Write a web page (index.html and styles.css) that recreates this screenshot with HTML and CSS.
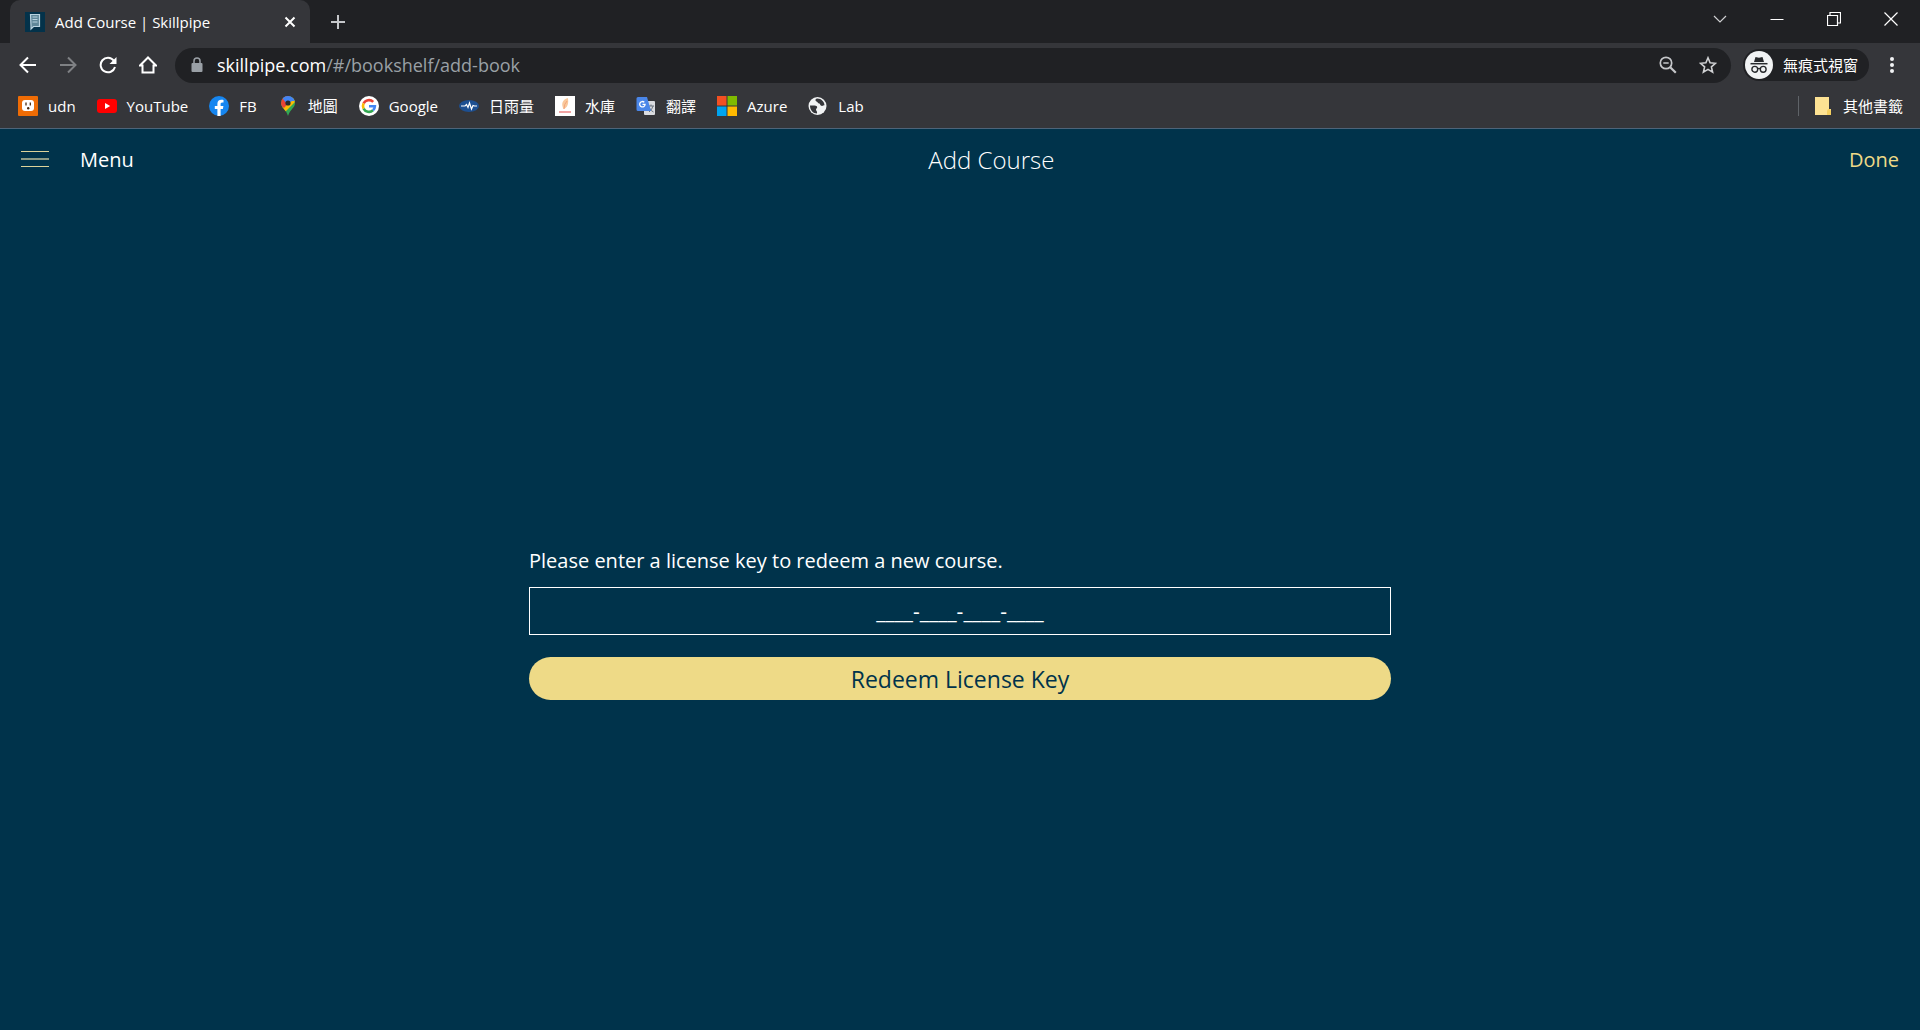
FILE: index.html
```html
<!DOCTYPE html>
<html lang="zh-Hant">
<head>
<meta charset="utf-8">
<meta name="viewport" content="width=device-width, initial-scale=1">
<title>Add Course | Skillpipe</title>
<link rel="stylesheet" href="styles.css">
</head>
<body>
<div class="browser">
  <div class="tabstrip">
    <div class="tab">
      <svg class="tab-icon" viewBox="0 0 20 20" width="20" height="20" aria-hidden="true"><rect width="20" height="20" fill="#03324a"/><path d="M5.500 2.500h9v12h-6l-2.500 2.500v-3z" fill="#5f8798" stroke="#b9d3df" stroke-width="1.200"/><path d="M7.500 5h5M7.500 7.500h5M7.500 10h5" stroke="#b9d3df"/></svg>
      <span class="tab-title">Add Course | Skillpipe</span>
      <button class="icon-button" aria-label="Close tab"><svg viewBox="0 0 12 12" width="12" height="12"><path d="M1.500 1.500l9 9M10.500 1.500l-9 9" stroke="#fff" stroke-width="2"/></svg></button>
    </div>
    <button class="icon-button new-tab" aria-label="New tab"><svg viewBox="0 0 16 16" width="16" height="16"><path d="M8 1v14M1 8h14" stroke="#c5c7ca" stroke-width="2"/></svg></button>
    <div class="window-controls">
      <button class="window-button" aria-label="Search tabs"><svg viewBox="0 0 14 14" width="14" height="14"><path d="M1 4l6 6 6-6" fill="none" stroke="#cfd0d2" stroke-width="1.200"/></svg></button>
      <button class="window-button" aria-label="Minimize"><svg viewBox="0 0 14 14" width="14" height="14"><path d="M.5 7.500h13" stroke="#fff"/></svg></button>
      <button class="window-button" aria-label="Restore"><svg viewBox="0 0 14 14" width="14" height="14"><path d="M.5 3.500h10v10h-10zM3 3.500v-3h10.500V11h-3" fill="none" stroke="#fff" stroke-width="1.200"/></svg></button>
      <button class="window-button" aria-label="Close"><svg viewBox="0 0 14 14" width="14" height="14"><path d="M.5.5l13 13M13.500.5l-13 13" stroke="#fff" stroke-width="1.200"/></svg></button>
    </div>
  </div>
  <div class="toolbar">
    <div class="nav">
      <button class="icon-button" aria-label="Back"><svg viewBox="0 0 18 18" width="18" height="18"><path d="M17 9H2M9 1.500L1.500 9 9 16.500" fill="none" stroke="#fff" stroke-width="2"/></svg></button>
      <button class="icon-button" aria-label="Forward"><svg viewBox="0 0 18 18" width="18" height="18"><path d="M1 9h15M9 1.500L16.500 9 9 16.500" fill="none" stroke="#7f8184" stroke-width="2"/></svg></button>
      <button class="icon-button" aria-label="Reload"><svg viewBox="0 0 18 18" width="18" height="18"><path d="M14.800 4.600A7.300 7.300 0 1 0 16 11" fill="none" stroke="#fff" stroke-width="2"/><path d="M17.500 1v7h-7z" fill="#fff"/></svg></button>
      <button class="icon-button" aria-label="Home"><svg viewBox="0 0 18 18" width="18" height="18"><path d="M1 9.500l8-8 8 8h-2.500v7h-11v-7z" fill="none" stroke="#fff" stroke-width="2"/></svg></button>
    </div>
    <div class="omnibox">
      <svg viewBox="0 0 12 16" width="12" height="16" aria-hidden="true"><rect x=".5" y="6" width="11" height="9" rx="1" fill="#9aa0a6"/><path d="M3 7V4a3 3 0 0 1 6 0v3" fill="none" stroke="#9aa0a6" stroke-width="1.500"/></svg>
      <span class="url">skillpipe.com<span class="url-path">/#/bookshelf/add-book</span></span>
      <button class="icon-button" aria-label="Zoom"><svg viewBox="0 0 18 18" width="18" height="18"><circle cx="7" cy="7" r="5.700" fill="none" stroke="#c5c7ca" stroke-width="1.700"/><path d="M11.200 11.200l5.600 5.600" stroke="#c5c7ca" stroke-width="2.200"/><path d="M4.300 7h5.400" stroke="#c5c7ca" stroke-width="1.500"/></svg></button>
      <button class="icon-button" aria-label="Bookmark this page"><svg viewBox="0 0 18 18" width="18" height="18"><path d="M9 1.800l2.100 5 5.400.5-4.100 3.600 1.200 5.300L9 13.400l-4.600 2.800 1.200-5.300-4.100-3.600 5.400-.5z" fill="none" stroke="#d0d1d3" stroke-width="1.600"/></svg></button>
    </div>
    <button class="profile">
      <svg viewBox="0 0 28 28" width="28" height="28" aria-hidden="true"><circle cx="14" cy="14" r="14" fill="#f1f3f4"/><path d="M9 11l1.500-5 3.500.8 3.500-.8L19 11z" fill="#27292c"/><path d="M5.500 12.700h17" stroke="#27292c" stroke-width="1.500"/><circle cx="9.800" cy="18.300" r="2.900" fill="none" stroke="#27292c" stroke-width="1.400"/><circle cx="18.200" cy="18.300" r="2.900" fill="none" stroke="#27292c" stroke-width="1.400"/><path d="M12.600 17.800q1.400-.8 2.800 0" fill="none" stroke="#27292c" stroke-width="1.400"/></svg>
      <span>無痕式視窗</span>
    </button>
    <button class="icon-button more" aria-label="More"><svg viewBox="0 0 4 18" width="4" height="18"><circle cx="2" cy="3" r="2" fill="#f1f3f4"/><circle cx="2" cy="9" r="2" fill="#f1f3f4"/><circle cx="2" cy="15" r="2" fill="#f1f3f4"/></svg></button>
  </div>
  <nav class="bookmarks" aria-label="Bookmarks">
    <a class="bookmark" href="#"><svg viewBox="0 0 20 20" width="20" height="20"><rect width="20" height="20" rx="1" fill="#ef6c05"/><rect x="4" y="4" width="12" height="11" rx="3" fill="#fff"/><path d="M8 6.500v3M12.300 6.500v3" stroke="#4a2a10" stroke-width="1.300"/><circle cx="10.200" cy="12.300" r="1.200" fill="#4a2a10"/></svg><span>udn</span></a>
    <a class="bookmark" href="#"><svg viewBox="0 0 20 20" width="20" height="20"><rect y="3" width="20" height="14" rx="3" fill="#f00"/><path d="M8 7l5.200 3L8 13z" fill="#fff"/></svg><span>YouTube</span></a>
    <a class="bookmark" href="#"><svg viewBox="0 0 20 20" width="20" height="20"><circle cx="10" cy="10" r="10" fill="#1686f0"/><path d="M8.400 20v-7H5.800v-3h2.600V7.800c0-2.600 1.500-4 3.900-4 1.100 0 2.200.2 2.200.2v2.500h-1.300c-1.200 0-1.600.8-1.600 1.600V10h2.800l-.5 3h-2.300v7z" fill="#fff"/></svg><span>FB</span></a>
    <a class="bookmark" href="#"><svg viewBox="0 0 20 20" width="20" height="20"><defs><clipPath id="pin"><path d="M10 0a7 7 0 0 0-7 7c0 5 5 6 7 13 2-7 7-8 7-13a7 7 0 0 0-7-7z"/></clipPath></defs><g clip-path="url(#pin)"><path d="M0 0h20v20H0z" fill="#34a853"/><path d="M3 20V12L15 1l3 0v4z" fill="#fbbc04"/><path d="M2 0h9l4 2-9 10-4-3z" fill="#ea4335"/><path d="M5 0h12v5h-3L9 8 4.600 2.500z" fill="#4285f4"/></g><circle cx="10" cy="7" r="2.600" fill="#292a2d"/></svg><span>地圖</span></a>
    <a class="bookmark" href="#"><svg viewBox="0 0 20 20" width="20" height="20"><circle cx="10" cy="10" r="10" fill="#fff"/><g fill="none" stroke-width="2.600"><path d="M14.200 5.900A6 6 0 0 0 4.600 7.400" stroke="#ea4335"/><path d="M4.600 7.400a6 6 0 0 0 0 5.200" stroke="#fbbc05"/><path d="M4.600 12.600a6 6 0 0 0 9.400 1.700" stroke="#34a853"/><path d="M14 14.300a6 6 0 0 0 1.900-4.100H10" stroke="#4285f4"/></g></svg><span>Google</span></a>
    <a class="bookmark" href="#"><svg viewBox="0 0 20 20" width="20" height="20"><ellipse cx="10" cy="10" rx="10" ry="6" fill="#1d4f91"/><path d="M2 10h4l1.500-1.500L9 11.500 10.500 7l2 6 1.500-3.500 1.500.5H18" fill="none" stroke="#fff" stroke-width="1.200"/></svg><span>日雨量</span></a>
    <a class="bookmark" href="#"><svg viewBox="0 0 20 20" width="20" height="20"><rect width="20" height="20" fill="#fff"/><path d="M12.800 2C7 4 6 8 8.500 13c4-1 5.500-6 4.300-11z" fill="#f9c99c"/><path d="M9 13q0-5 3-8" fill="none" stroke="#f3a57c"/><path d="M4 16h12" stroke="#ec8585" stroke-width="1.500"/></svg><span>水庫</span></a>
    <a class="bookmark" href="#"><svg viewBox="0 0 20 20" width="20" height="20"><rect x="8" y="5" width="11" height="14" rx="1" fill="#dadce0"/><path d="M12 10h6M15 8.500V10M17 10q-1 4-4 6M13.500 12q1.500 3 4 4" fill="none" stroke="#6b7580"/><path d="M2 1h9l4 14H2a1.500 1.500 0 0 1-1.500-1.500v-11A1.500 1.500 0 0 1 2 1z" fill="#4a86e8"/><path d="M8.300 6.300a2.700 2.700 0 1 0 .8 2H6.500" fill="none" stroke="#fff" stroke-width="1.300"/></svg><span>翻譯</span></a>
    <a class="bookmark" href="#"><svg viewBox="0 0 20 20" width="20" height="20"><path d="M0 0h9.500v9.500H0z" fill="#f25022"/><path d="M10.500 0H20v9.500h-9.500z" fill="#7fba00"/><path d="M0 10.500h9.500V20H0z" fill="#00a4ef"/><path d="M10.500 10.500H20V20h-9.500z" fill="#ffb900"/></svg><span>Azure</span></a>
    <a class="bookmark" href="#"><svg viewBox="0 0 20 20" width="20" height="20"><circle cx="9.500" cy="10" r="9" fill="#f1f3f4"/><path d="M2 9.500c3 0 6-.5 7 1 .8 1.500-1 2-1 3 0 1.500 1.500 1.500 1 4C5 17.500 2 14 2 9.500zM9 2.600c-2 .4-2 2.400-.5 2.900 1.500.4 1.300 2 2.700 2 1 0 .8 1.800 2 2.300 1.600.6 3.200-1 3.300-.3 0-3.500-3-7-7.500-6.900z" fill="#35363a"/></svg><span>Lab</span></a>
    <a class="bookmark other" href="#"><svg viewBox="0 0 20 20" width="20" height="20"><path d="M2 1h14v12h2v6H2z" fill="#fde293"/><path d="M14 19v-3q0-3 2-3t2 3v3z" fill="#f5cf5e"/></svg><span>其他書籤</span></a>
  </nav>
</div>
<header class="app-header">
  <button class="menu">
    <svg viewBox="0 0 30 18" width="30" height="18" aria-hidden="true"><path d="M1 1.500h28M1 16.500h28" stroke="#ddd39a"/><path d="M1 9h28" stroke="#b9bd98" stroke-width="1.500"/></svg>
    <span>Menu</span>
  </button>
  <h1 class="title">Add Course</h1>
  <a class="done" href="#">Done</a>
</header>
<main class="content">
  <form class="redeem">
    <label class="prompt" for="license-key">Please enter a license key to redeem a new course.</label>
    <input class="key" id="license-key" type="text" value="____-____-____-____">
    <button class="submit" type="submit">Redeem License Key</button>
  </form>
</main>
</body>
</html>
```
FILE: styles.css
```css
* {
  box-sizing: border-box;
}

body {
  margin: 0;
  min-height: 100vh;
  background: #00334b;
  color: #fff;
  font-family: "Open Sans", "Noto Sans CJK TC", sans-serif;
  font-size: 15px;
}

button {
  padding: 0;
  border: 0;
  background: none;
  color: inherit;
  font: inherit;
}

a {
  color: inherit;
  text-decoration: none;
}

svg {
  display: block;
  flex: none;
}

.browser {
  background: #35363a;
  border-bottom: 1px solid #4d6479;
  line-height: 20px;
}

.tabstrip {
  display: flex;
  align-items: stretch;
  height: 43px;
  padding: 0 1px 0 10px;
  background: #202124;
}

.tab {
  display: flex;
  align-items: center;
  gap: 10px;
  width: 300px;
  padding: 0 14px 0 15px;
  border-radius: 10px 10px 0 0;
  background: #35363a;
}

.tab-title {
  flex: 1;
}

.icon-button {
  display: flex;
  align-items: center;
  justify-content: center;
}

.new-tab {
  padding: 0 20px;
}

.window-controls {
  display: flex;
  margin-left: auto;
}

.window-button {
  display: flex;
  justify-content: center;
  align-items: center;
  width: 57px;
  height: 38px;
}

.toolbar {
  display: flex;
  align-items: center;
  height: 44px;
  padding: 0 26px 0 19px;
}

.nav {
  display: flex;
  gap: 22px;
  margin-right: 18px;
}

.omnibox {
  display: flex;
  flex: 1;
  align-items: center;
  gap: 22px;
  height: 35px;
  padding: 0 14px 0 16px;
  border-radius: 18px;
  background: #202124;
}

.url {
  flex: 1;
  margin-left: -8px;
  font-size: 18px;
}

.url-path {
  color: #9aa0a6;
}

.profile {
  display: flex;
  align-items: center;
  gap: 10px;
  height: 32px;
  margin-left: 12px;
  padding: 0 11px 0 2px;
  border-radius: 16px;
  background: #202124;
}

.more {
  margin-left: 21px;
}

.bookmarks {
  display: flex;
  align-items: center;
  gap: 21px;
  height: 41px;
  padding: 0 17px 3px 18px;
}

.bookmark {
  display: flex;
  align-items: center;
  gap: 10px;
}

.other {
  margin-left: auto;
  padding-left: 14px;
  border-left: 1px solid #5f6368;
}

.app-header {
  display: flex;
  align-items: center;
  justify-content: space-between;
  height: 60px;
  padding: 0 21px 0 20px;
  font-size: 20px;
}

.menu {
  display: flex;
  align-items: center;
  gap: 30px;
}

.title {
  margin: 0;
  font-size: 24px;
  font-weight: 300;
}

.done {
  color: #eeda87;
}

.content {
  padding: 354px 20px 20px;
}

.redeem {
  display: flex;
  flex-direction: column;
  max-width: 862px;
  margin: 0 auto;
}

.prompt {
  margin-bottom: 8px;
  font-size: 20px;
  line-height: 36px;
}

.key {
  height: 48px;
  margin-bottom: 22px;
  padding: 0 12px;
  border: 1px solid #fff;
  border-radius: 0;
  background: transparent;
  color: #fff;
  font: inherit;
  font-size: 21px;
  text-align: center;
}

.submit {
  height: 43px;
  border-radius: 22px;
  background: #eeda87;
  color: #00334b;
  font-size: 23px;
}
```
